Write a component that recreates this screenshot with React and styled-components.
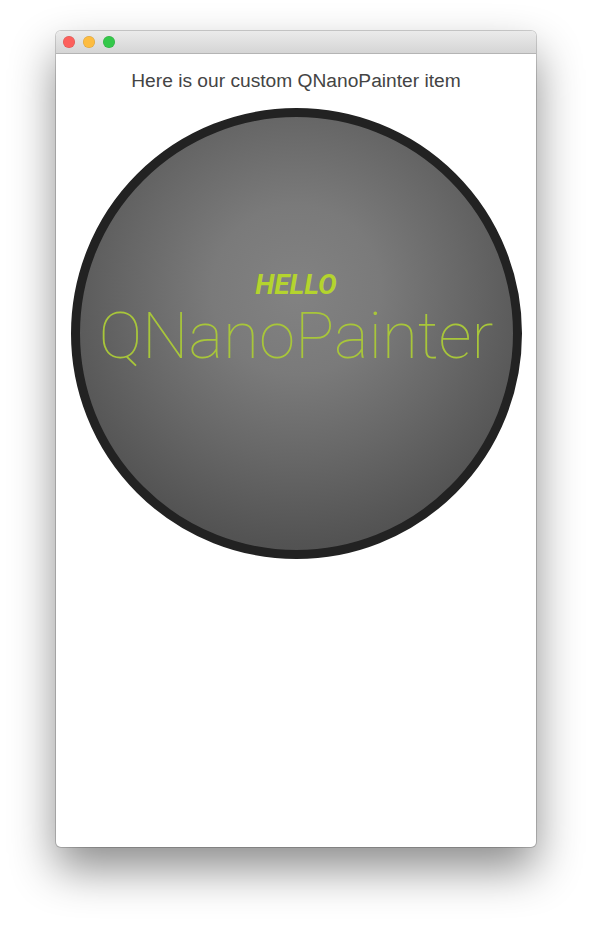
import React from "react";
import styled, { createGlobalStyle } from "styled-components";

const GlobalStyle = createGlobalStyle`
  html, body {
    margin: 0;
    padding: 0;
    background: #ffffff;
  }
`;

export default function App() {
  const lights = ["#fc605c", "#fdbc40", "#34c84a"];

  return (
    <Page>
      <GlobalStyle />
      <Window>
        <TitleBar>
          {lights.map((c) => (
            <Light key={c} color={c} />
          ))}
        </TitleBar>
        <Content>
          <Caption>Here is our custom QNanoPainter item</Caption>
          <Dial>
            <Hello>HELLO</Hello>
            <Brand>QNanoPainter</Brand>
          </Dial>
        </Content>
      </Window>
    </Page>
  );
}

const Page = styled.div`
  width: 592px;
  height: 927px;
  padding: 31px 0 0 56px;
  box-sizing: border-box;
  overflow: hidden;
`;

const Window = styled.div`
  width: 480px;
  height: 816px;
  border-radius: 5px;
  overflow: hidden;
  background: #fff;
  display: flex;
  flex-direction: column;
  box-shadow: 0 0 0 1px rgba(0, 0, 0, 0.18), 0 22px 45px rgba(0, 0, 0, 0.45);
`;

const TitleBar = styled.div`
  height: 22px;
  flex: none;
  display: flex;
  align-items: center;
  gap: 8px;
  padding-left: 7px;
  background: linear-gradient(#ebebeb, #d5d5d5);
  border-bottom: 1px solid #b4b4b4;
`;

const Light = styled.span`
  width: 12px;
  height: 12px;
  border-radius: 50%;
  background: ${(p) => p.color};
  box-shadow: inset 0 0 0 0.5px rgba(0, 0, 0, 0.15);
`;

const Content = styled.div`
  flex: 1;
  display: flex;
  flex-direction: column;
  align-items: center;
  padding-top: 16px;
`;

const Caption = styled.div`
  font-family: "Liberation Sans", Arial, sans-serif;
  font-size: 19.2px;
  color: #444;
  line-height: 22px;
  margin-bottom: 16px;
`;

const Dial = styled.div`
  width: 433px;
  height: 280px;
  border: 9px solid #222;
  border-radius: 50%;
  background: radial-gradient(
    circle at 50% 40%,
    #828282 0%,
    #7a7a7a 25%,
    #676767 50%,
    #535353 75%,
    #474747 100%
  );
  display: flex;
  flex-direction: column;
  align-items: center;
  padding-top: 153px;
  box-sizing: content-box;
`;

const Hello = styled.div`
  font-family: Roboto, "Liberation Sans", sans-serif;
  font-weight: 700;
  font-style: italic;
  font-size: 28px;
  line-height: 30px;
  color: #b4d42e;
`;

const Brand = styled.div`
  font-family: Roboto, "Liberation Sans", sans-serif;
  font-weight: 100;
  font-size: 65.5px;
  line-height: 64px;
  color: #a8c63a;
  margin-top: 4px;
`;
